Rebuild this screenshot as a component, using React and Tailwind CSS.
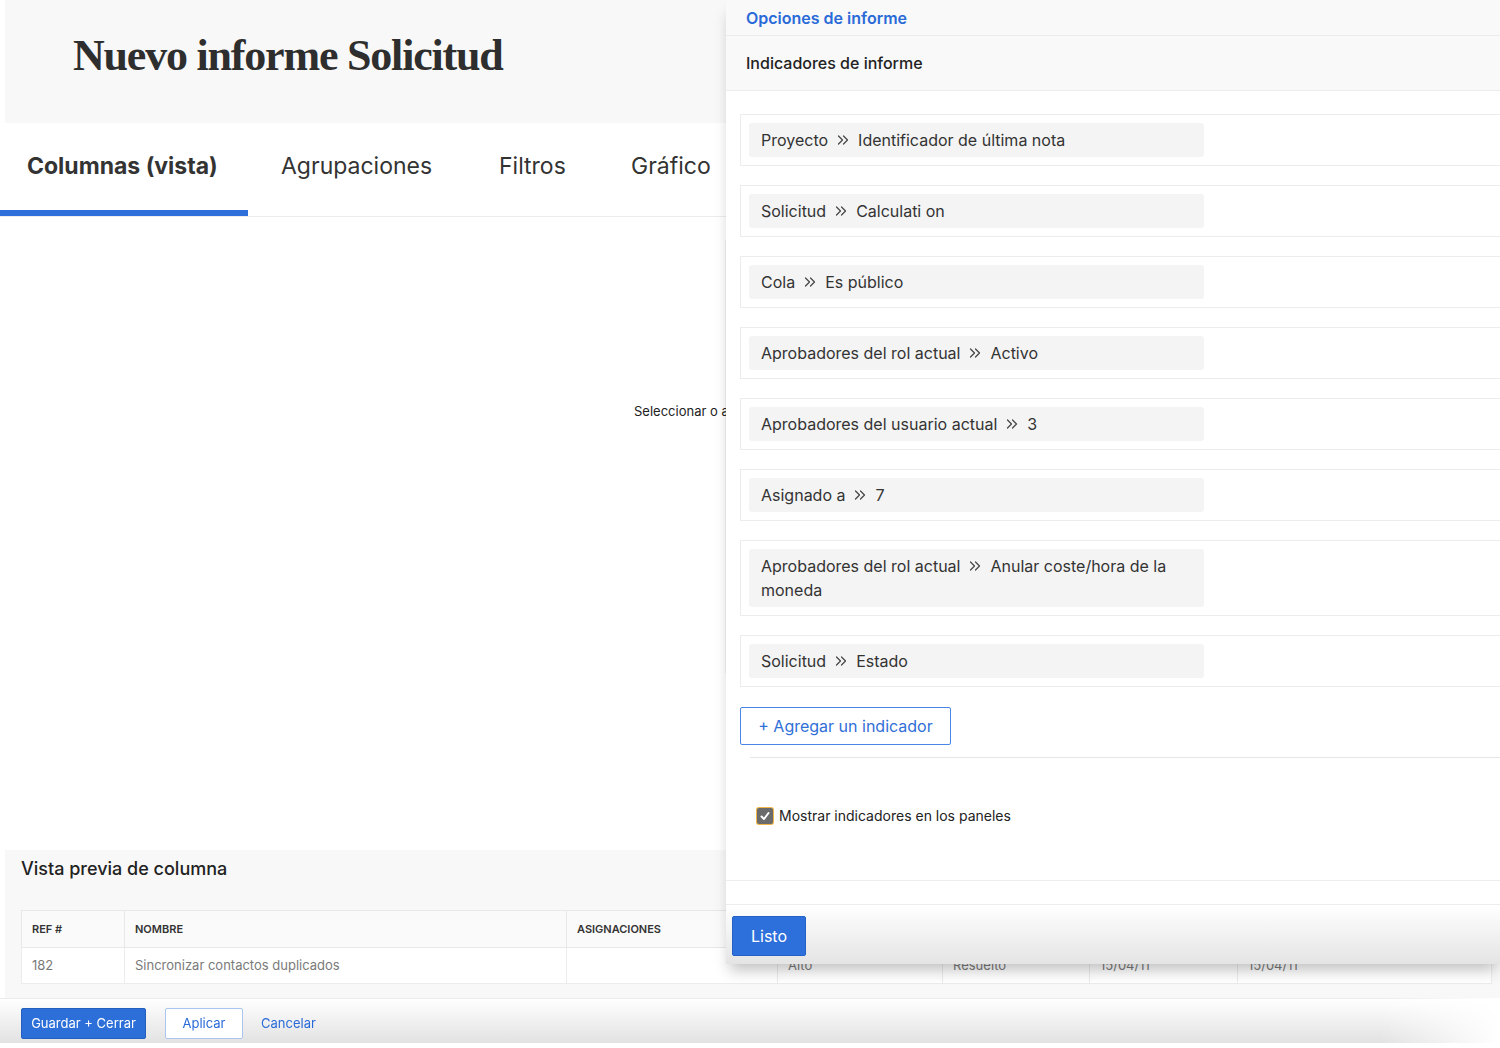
import React from "react";

const indicators = [
  ["Proyecto", "Identificador de última nota"],
  ["Solicitud", "Calculati on"],
  ["Cola", "Es público"],
  ["Aprobadores del rol actual", "Activo"],
  ["Aprobadores del usuario actual", "3"],
  ["Asignado a", "7"],
  ["Aprobadores del rol actual", "Anular coste/hora de la moneda"],
  ["Solicitud", "Estado"],
];

const columns = [
  { label: "REF #", w: "w-[103px]", value: "182" },
  { label: "NOMBRE", w: "w-[442px]", value: "Sincronizar contactos duplicados" },
  { label: "ASIGNACIONES", w: "w-[211px]", value: "" },
  { label: "PRIORIDAD", w: "w-[165px]", value: "Alto" },
  { label: "ESTADO", w: "w-[147px]", value: "Resuelto" },
  { label: "ENTRADA", w: "w-[148px]", value: "15/04/11" },
  { label: "FINALIZACIÓN", w: "w-[254px]", value: "15/04/11" },
];

const DoubleChevron = () => (
  <svg
    viewBox="0 0 12 10"
    className="inline-block w-[12px] h-[10px] mx-[9px] align-[1px]"
    fill="none"
    stroke="#444"
    strokeWidth="1.2"
    strokeLinecap="round"
    strokeLinejoin="round"
  >
    <path d="M1.5 1l4 4-4 4" />
    <path d="M6.5 1l4 4-4 4" />
  </svg>
);

const Tabs = () => {
  const tabs = [
    { name: "Columnas (vista)", w: "w-[248px] pl-[27px]", active: true },
    { name: "Agrupaciones", w: "w-[218px] pl-[33px]" },
    { name: "Filtros", w: "w-[132px] pl-[33px]" },
    { name: "Gráfico", w: "w-[134px] pl-[33px]" },
  ];
  return (
    <nav className="h-[94px] w-[732px] flex border-b border-[#ececec]">
      {tabs.map((t) => (
        <div
          key={t.name}
          className={`${t.w} h-full pt-[28px] text-[23px] leading-[30px] text-[#333] whitespace-nowrap ${
            t.active ? "font-bold border-b-[6px] border-[#2f6fdb]" : ""
          }`}
        >
          {t.name}
        </div>
      ))}
    </nav>
  );
};

const Preview = () => (
  <section className="ml-[5px] h-[148px] bg-[#f8f8f8] pl-[16px] pt-[8px]">
    <h2 className="text-[18px] leading-[22px] font-medium text-[#222]">
      Vista previa de columna
    </h2>
    <table className="mt-[30px] table-fixed border-collapse">
      <thead>
        <tr className="h-[37px] bg-[#fafafa]">
          {columns.map((c) => (
            <th
              key={c.label}
              className={`${c.w} border border-[#e8e8e8] pl-[10px] text-left text-[11px] font-semibold text-[#333]`}
            >
              {c.label}
            </th>
          ))}
        </tr>
      </thead>
      <tbody>
        <tr className="h-[36px] bg-white">
          {columns.map((c) => (
            <td
              key={c.label}
              className="border border-[#ececec] pl-[10px] text-[13px] text-[#7a7a7a]"
            >
              {c.value}
            </td>
          ))}
        </tr>
      </tbody>
    </table>
  </section>
);

const Footer = () => (
  <footer className="h-[45px] border-t border-[#ececec] bg-gradient-to-b from-white to-[#e2e2e2] [mask-image:linear-gradient(to_right,black_92%,transparent)] flex items-start pt-[9px] pl-[21px] text-[13px]">
    <button className="h-[31px] w-[125px] rounded-[2px] bg-[#2d6fd8] text-white border border-[#245fc0]">
      Guardar + Cerrar
    </button>
    <button className="ml-[19px] h-[31px] w-[78px] rounded-[2px] bg-white border border-[#a9c5f0] text-[#2a6ad8]">
      Aplicar
    </button>
    <button className="ml-[18px] h-[31px] text-[#2a6ad8]">Cancelar</button>
  </footer>
);

const OptionsPanel = () => (
  <aside className="absolute left-[726px] top-0 w-[774px] h-[964px] bg-white flex flex-col shadow-[0_10px_14px_-4px_rgba(0,0,0,0.25)]">
    <div className="h-[36px] shrink-0 bg-[#f9f9f9] border-b border-[#ececec] pl-[20px] flex items-center text-[16px] font-semibold text-[#2a6ad8]">
      Opciones de informe
    </div>
    <div className="h-[55px] shrink-0 bg-[#f9f9f9] border-b border-[#ececec] pl-[20px] flex items-center text-[16px] font-medium text-[#222]">
      Indicadores de informe
    </div>

    <div className="pl-[14px] pt-[23px] flex flex-col gap-[19px]">
      {indicators.map(([a, b], i) => (
        <div
          key={i}
          className="border border-r-0 border-[#ececec] py-[8px] pl-[8px]"
        >
          <div className="w-[455px] rounded-[3px] bg-[#f4f4f4] px-[12px] py-[5px] text-[16px] leading-[24px] text-[#333]">
            <span>{a}</span>
            <DoubleChevron />
            <span>{b}</span>
          </div>
        </div>
      ))}
    </div>

    <button className="ml-[14px] mt-[20px] h-[38px] w-[211px] rounded-[2px] border border-[#4a86e8] text-[16px] text-[#2f6fd8]">
      + Agregar un indicador
    </button>

    <div className="ml-[24px] mt-[12px] border-t border-[#e6e6e6]" />

    <label className="mt-[47px] pl-[31px] flex items-center gap-[6px] text-[14px] text-[#222]">
      <span className="w-[16px] h-[16px] rounded-[2px] bg-[#6b6b6b] ring-1 ring-[#f2b54a] flex items-center justify-center">
        <svg viewBox="0 0 12 12" className="w-[12px] h-[12px]" fill="none" stroke="white" strokeWidth="2" strokeLinecap="round" strokeLinejoin="round">
          <path d="M2.5 6.5l2.5 2.5 4.5-6" />
        </svg>
      </span>
      Mostrar indicadores en los paneles
    </label>

    <div className="mt-auto h-[24px] border-t border-[#ededed]" />
    <div className="h-[60px] border-t border-[#ededed] bg-gradient-to-b from-white to-[#e4e4e4] pl-[6px] pt-[11px]">
      <button className="h-[40px] w-[74px] rounded-[2px] bg-[#2d6fdb] border border-[#2562c8] text-[16px] text-white">
        Listo
      </button>
    </div>
  </aside>
);

export default function App() {
  return (
    <div className="relative w-[1500px] h-[1048px] overflow-hidden bg-white font-['Inter',sans-serif]">
      <div className="flex flex-col h-full">
        <header className="ml-[5px] h-[123px] shrink-0 bg-[#f8f8f8] pl-[68px] pt-[34px]">
          <h1 className="font-['Liberation_Serif',serif] font-bold text-[44px] leading-[44px] tracking-[-1.2px] text-[#2e2e2e]">
            Nuevo informe Solicitud
          </h1>
        </header>

        <Tabs />

        <div className="h-[633px] shrink-0">
          <div className="mt-[23px] h-[433px] w-[726px] border-r border-[#f1f1f1] pt-[163px] pl-[634px]">
            <div className="w-[92px] overflow-hidden whitespace-nowrap text-[13px] leading-[16px] text-[#222]">
              Seleccionar o a
            </div>
          </div>
        </div>

        <Preview />
        <Footer />
      </div>

      <OptionsPanel />
    </div>
  );
}
